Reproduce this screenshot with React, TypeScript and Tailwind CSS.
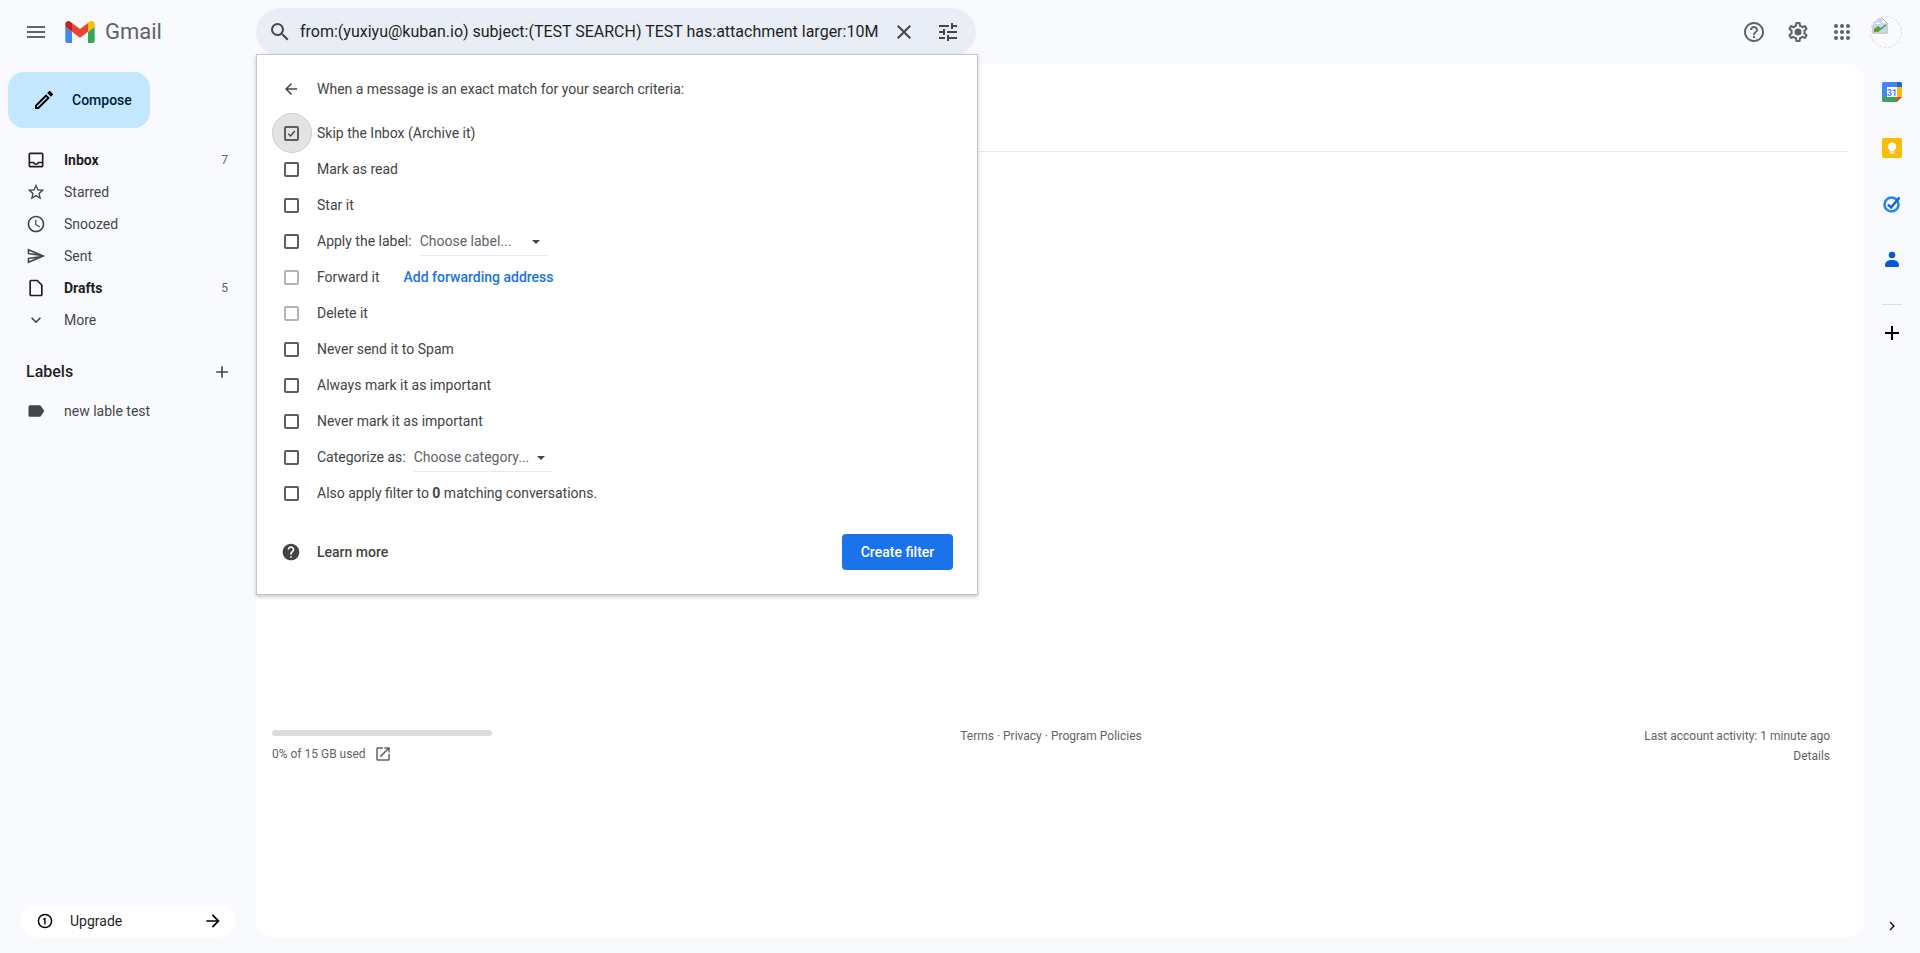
import React from "react";

const P = {
  menu: "M3 18h18v-2H3v2zm0-5h18v-2H3v2zm0-7v2h18V6H3z",
  search: "M15.5 14h-.79l-.28-.27A6.471 6.471 0 0 0 16 9.5 6.5 6.5 0 1 0 9.5 16c1.61 0 3.09-.59 4.23-1.57l.27.28v.79l5 4.99L20.49 19l-4.99-5zm-6 0C7.01 14 5 11.99 5 9.5S7.01 5 9.5 5 14 7.01 14 9.5 11.99 14 9.5 14z",
  close: "M19 6.41L17.59 5 12 10.59 6.41 5 5 6.41 10.59 12 5 17.59 6.41 19 12 13.41 17.59 19 19 17.59 13.41 12z",
  tune: "M3 17v2h6v-2H3zM3 5v2h10V5H3zm10 16v-2h8v-2h-8v-2h-2v6h2zM7 9v2H3v2h4v2h2V9H7zm14 4v-2H11v2h10zm-6-4h2V7h4V5h-4V3h-2v6z",
  help: "M11 18h2v-2h-2v2zm1-16C6.48 2 2 6.48 2 12s4.48 10 10 10 10-4.48 10-10S17.52 2 12 2zm0 18c-4.41 0-8-3.59-8-8s3.59-8 8-8 8 3.59 8 8-3.59 8-8 8zm0-14c-2.21 0-4 1.79-4 4h2c0-1.1.9-2 2-2s2 .9 2 2c0 2-3 1.75-3 5h2c0-2.25 3-2.5 3-5 0-2.21-1.79-4-4-4z",
  settings: "M19.43 12.98c.04-.32.07-.64.07-.98 0-.34-.03-.66-.07-.98l2.11-1.65c.19-.15.24-.42.12-.64l-2-3.46c-.09-.16-.26-.25-.44-.25-.06 0-.12.01-.17.03l-2.49 1c-.52-.4-1.08-.73-1.69-.98l-.38-2.65C14.46 2.18 14.25 2 14 2h-4c-.25 0-.46.18-.49.42l-.38 2.65c-.61.25-1.17.59-1.69.98l-2.49-1c-.06-.02-.12-.03-.18-.03-.17 0-.34.09-.43.25l-2 3.46c-.13.22-.07.49.12.64l2.11 1.65c-.04.32-.07.65-.07.98 0 .33.03.66.07.98l-2.11 1.65c-.19.15-.24.42-.12.64l2 3.46c.09.16.26.25.44.25.06 0 .12-.01.17-.03l2.49-1c.52.4 1.08.73 1.69.98l.38 2.65c.03.24.24.42.49.42h4c.25 0 .46-.18.49-.42l.38-2.65c.61-.25 1.17-.59 1.69-.98l2.49 1c.06.02.12.03.18.03.17 0 .34-.09.43-.25l2-3.46c.12-.22.07-.49-.12-.64l-2.11-1.65zm-1.98-1.71c.04.31.05.52.05.73 0 .21-.02.43-.05.73l-.14 1.13.89.7 1.08.84-.7 1.21-1.27-.51-1.04-.42-.9.68c-.43.32-.84.56-1.25.73l-1.06.43-.16 1.13-.2 1.35h-1.4l-.19-1.35-.16-1.13-1.06-.43c-.43-.18-.83-.41-1.23-.71l-.91-.7-1.06.43-1.27.51-.7-1.21 1.08-.84.89-.7-.14-1.13c-.03-.31-.05-.54-.05-.74s.02-.43.05-.73l.14-1.13-.89-.7-1.08-.84.7-1.21 1.27.51 1.04.42.9-.68c.43-.32.84-.56 1.25-.73l1.06-.43.16-1.13.2-1.35h1.39l.19 1.35.16 1.13 1.06.43c.43.18.83.41 1.23.71l.91.7 1.06-.43 1.27-.51.7 1.21-1.07.85-.89.7.14 1.13zM12 8.5a3.5 3.5 0 1 0 0 7 3.5 3.5 0 0 0 0-7z",
  pencil: "M3 17.25V21h3.75L17.81 9.94l-3.75-3.75L3 17.25zM5.92 19H5v-.92l9.06-9.06.92.92L5.92 19zM20.71 5.63l-2.34-2.34c-.2-.2-.45-.29-.71-.29s-.51.1-.7.29l-1.83 1.83 3.75 3.75 1.83-1.83c.39-.39.39-1.02 0-1.41z",
  inbox: "M19 3H5c-1.1 0-2 .9-2 2v14c0 1.1.9 2 2 2h14c1.1 0 2-.9 2-2V5c0-1.1-.9-2-2-2zm0 16H5v-3h3.56c.69 1.19 1.97 2 3.45 2s2.75-.81 3.45-2H19v3zm0-5h-4.99c0 1.1-.9 2-2 2s-2-.9-2-2H5V5h14v9z",
  star: "M22 9.24l-7.19-.62L12 2 9.19 8.63 2 9.24l5.46 4.73L5.82 21 12 17.27 18.18 21l-1.63-7.03L22 9.24zM12 15.4l-3.76 2.27 1-4.28-3.32-2.88 4.38-.38L12 6.1l1.71 4.04 4.38.38-3.32 2.88 1 4.28L12 15.4z",
  clock: "M11.99 2C6.47 2 2 6.48 2 12s4.47 10 9.99 10C17.52 22 22 17.52 22 12S17.52 2 11.99 2zM12 20c-4.42 0-8-3.58-8-8s3.58-8 8-8 8 3.58 8 8-3.58 8-8 8zm.5-13H11v6l5.25 3.15.75-1.23-4.5-2.67z",
  send: "M4.01 6.03l7.51 3.22-7.52-1 .01-2.22m7.5 8.72L4 17.97v-2.22l7.51-1M2.01 3L2 10l15 2-15 2 .01 7L23 12 2.01 3z",
  draft: "M14 2H6c-1.1 0-2 .9-2 2v16c0 1.1.9 2 2 2h12c1.1 0 2-.9 2-2V8l-6-6zm4 18H6V4h7.17L18 8.83V20z",
  chevDown: "M16.59 8.59L12 13.17 7.41 8.59 6 10l6 6 6-6z",
  label: "M17.63 5.84C17.27 5.33 16.67 5 16 5L5 5.01C3.9 5.01 3 5.9 3 7v10c0 1.1.9 1.99 2 1.99L16 19c.67 0 1.27-.33 1.63-.84L22 12l-4.37-6.16z",
  plus: "M19 13h-6v6h-2v-6H5v-2h6V5h2v6h6v2z",
  back: "M20 11H7.83l5.59-5.59L12 4l-8 8 8 8 1.41-1.41L7.83 13H20v-2z",
  forward: "M12 4l-1.41 1.41L16.17 11H4v2h12.17l-5.58 5.59L12 20l8-8z",
  helpFill: "M12 2C6.48 2 2 6.48 2 12s4.48 10 10 10 10-4.48 10-10S17.52 2 12 2zm1 17h-2v-2h2v2zm2.07-7.75l-.9.92C13.45 12.9 13 13.5 13 15h-2v-.5c0-1.1.45-2.1 1.17-2.83l1.24-1.26c.37-.36.59-.86.59-1.41 0-1.1-.9-2-2-2s-2 .9-2 2H8c0-2.21 1.79-4 4-4s4 1.79 4 4c0 .88-.36 1.68-.93 2.25z",
  open: "M19 19H5V5h7V3H5c-1.11 0-2 .9-2 2v14c0 1.1.89 2 2 2h14c1.1 0 2-.9 2-2v-7h-2v7zM14 3v2h3.59l-9.83 9.83 1.41 1.41L19 6.41V10h2V3h-7z",
  chevRight: "M10 6L8.59 7.41 13.17 12l-4.58 4.59L10 18l6-6z",
};

function Icon({ d, size = 24, color = "#444746" }: { d: string; size?: number; color?: string }) {
  return (
    <svg width={size} height={size} viewBox="0 0 24 24" fill={color} className="shrink-0">
      <path d={d} />
    </svg>
  );
}

function IconBox({ children }: { children: React.ReactNode }) {
  return <div className="w-[24px] h-[24px] flex items-center justify-center shrink-0">{children}</div>;
}

function GmailLogo() {
  return (
    <svg width="30" height="22" viewBox="52 42 88 66" className="shrink-0">
      <path fill="#4285f4" d="M58 108h14V74L52 59v43c0 3.32 2.69 6 6 6" />
      <path fill="#34a853" d="M120 108h14c3.32 0 6-2.69 6-6V59l-20 15" />
      <path fill="#fbbc04" d="M120 48v26l20-15v-8c0-7.42-8.47-11.65-14.4-7.2" />
      <path fill="#ea4335" d="M72 74V48l24 18 24-18v26L96 92" />
      <path fill="#c5221f" d="M52 51v8l20 15V48l-5.6-4.2c-5.94-4.45-14.4-.22-14.4 7.2" />
    </svg>
  );
}

function AppsIcon() {
  const c = [6, 12, 18];
  return (
    <svg width="24" height="24" viewBox="0 0 24 24" fill="#5f6368">
      {c.map((y) => c.map((x) => <circle key={`${x}-${y}`} cx={x} cy={y} r="2" />))}
    </svg>
  );
}

function NavItem({ d, label, bold, count }: { d: string; label: string; bold?: boolean; count?: string }) {
  return (
    <div className="h-[32px] flex items-center pl-[26px] pr-[28px]">
      <Icon d={d} size={20} color={bold ? "#1f1f1f" : "#444746"} />
      <span className={`ml-[18px] text-[14px] ${bold ? "font-bold text-[#1f1f1f]" : "text-[#444746]"}`}>{label}</span>
      {count && <span className="ml-auto text-[12px] text-[#5f6368]">{count}</span>}
    </div>
  );
}

function Check({ on, off }: { on?: boolean; off?: boolean }) {
  return (
    <div className={`relative ml-[27px] w-[15px] h-[15px] shrink-0 rounded-[2px] border-2 ${off ? "border-[#b4b4b4]" : "border-[#5e5e5e]"}`}>
      {on && (
        <>
          <div className="absolute -left-[14.5px] -top-[14.5px] w-[40px] h-[40px] rounded-full bg-[#e3e3e3] border border-[#cfcfcf] -z-10" />
          <svg width="11" height="11" viewBox="0 0 11 11" className="absolute left-0 top-0">
            <path d="M2.2 5.6 4.5 8l4.3-5" fill="none" stroke="#444" strokeWidth="1.3" />
          </svg>
        </>
      )}
    </div>
  );
}

function Row({ children, on, off }: { children: React.ReactNode; on?: boolean; off?: boolean }) {
  return (
    <div className="h-[36px] flex items-center">
      <Check on={on} off={off} />
      <div className="ml-[18px] flex items-center text-[14px] text-[#444]">{children}</div>
    </div>
  );
}

function FakeSelect({ text, w, ml }: { text: string; w: string; ml: string }) {
  return (
    <div className={`${w} ${ml} h-[28px] flex items-center justify-between relative border-b border-[#e8e8ee] pr-[8px] text-[#5f6368] mt-[2px]`}>
      <span>{text}</span>
      <div className="w-0 h-0 border-x-[4px] border-x-transparent border-t-[4px] border-t-[#444]" />
    </div>
  );
}

function PopupFilter() {
  return (
    <div className="absolute left-[256px] top-[54px] w-[722px] h-[541px] bg-white border border-[#c6c6c6] shadow-[0_2px_4px_rgba(0,0,0,0.22)] isolate pt-[16px]">
      <div className="h-[36px] flex items-center text-[14px] text-[#444]">
        <div className="ml-[25px] w-[18px] flex justify-center">
          <Icon d={P.back} size={18} color="#444" />
        </div>
        <span className="ml-[17px]">When a message is an exact match for your search criteria:</span>
      </div>
      <div className="mt-[8px]">
        <Row on>Skip the Inbox (Archive it)</Row>
        <Row>Mark as read</Row>
        <Row>Star it</Row>
        <Row>
          <span>Apply the label:</span>
          <FakeSelect text="Choose label..." w="w-[128px]" ml="ml-[8px]" />
        </Row>
        <Row off>
          <span>Forward it</span>
          <span className="ml-[24px] text-[#1a73e8] font-medium">Add forwarding address</span>
        </Row>
        <Row off>Delete it</Row>
        <Row>Never send it to Spam</Row>
        <Row>Always mark it as important</Row>
        <Row>Never mark it as important</Row>
        <Row>
          <span>Categorize as:</span>
          <FakeSelect text="Choose category..." w="w-[139px]" ml="ml-[8px]" />
        </Row>
        <Row>
          <span>
            Also apply filter to <b className="font-bold">0</b> matching conversations.
          </span>
        </Row>
      </div>
      <div className="mt-[23px] h-[36px] flex items-center pr-[24px]">
        <div className="ml-[24px]">
          <Icon d={P.helpFill} size={20} color="#444" />
        </div>
        <span className="ml-[16px] text-[14px] text-[#444] font-medium">Learn more</span>
        <div className="ml-auto h-[36px] w-[111px] rounded-[4px] bg-[#1a73e8] text-white text-[14px] font-medium flex items-center justify-center">
          Create filter
        </div>
      </div>
    </div>
  );
}

function BrokenAvatar() {
  return (
    <div className="relative w-[32px] h-[32px] rounded-full border border-dashed border-[#dcdcdc] overflow-hidden bg-[#f8fafd]">
      <svg width="16" height="16" viewBox="0 0 16 16" className="absolute left-[1px] top-[1px]">
        <path d="M1 1h10l4 4v10H1z" fill="#fff" stroke="#a0a0a0" />
        <path d="M2 2h8v3h4v9H2z" fill="#c3d7f5" />
        <path d="M2 14v-3l4-3 3 2 5-4v2l-8 6z" fill="#5aa02c" />
        <path d="M3 6l3-2 3 2z" fill="#fff" />
      </svg>
    </div>
  );
}

function RailIcon({ children }: { children: React.ReactNode }) {
  return <div className="h-[56px] flex items-center justify-center">{children}</div>;
}

export default function App() {
  return (
    <div className="relative w-[1920px] h-[953px] overflow-hidden bg-[#f8fafd] font-['Roboto',sans-serif] flex flex-col">
      {/* Header */}
      <header className="h-[64px] flex items-center shrink-0">
        <div className="w-[256px] flex items-center shrink-0">
          <div className="ml-[24px]">
            <Icon d={P.menu} color="#5f6368" />
          </div>
          <div className="ml-[17px]">
            <GmailLogo />
          </div>
          <span className="ml-[10px] text-[22px] text-[#5f6368] leading-none">Gmail</span>
        </div>
        <div className="w-[720px] h-[48px] rounded-[24px] bg-[#e9eef6] flex items-center pl-[12px] pr-[14px]">
          <Icon d={P.search} color="#444746" />
          <div className="ml-[8px] w-[580px] overflow-hidden whitespace-nowrap text-[16px] text-[#1f1f1f]">
            from:(yuxiyu@kuban.io) subject:(TEST SEARCH) TEST has:attachment larger:10M
          </div>
          <div className="ml-[12px]">
            <Icon d={P.close} color="#444746" />
          </div>
          <div className="ml-[20px]">
            <Icon d={P.tune} color="#444746" />
          </div>
        </div>
        <div className="ml-auto flex items-center pr-[18px]">
          <div className="flex items-center gap-[20px]">
            <IconBox><Icon d={P.help} color="#5f6368" /></IconBox>
            <IconBox><Icon d={P.settings} color="#5f6368" /></IconBox>
            <IconBox><AppsIcon /></IconBox>
          </div>
          <div className="ml-[16px]">
            <BrokenAvatar />
          </div>
        </div>
      </header>

      {/* Body */}
      <div className="flex-1 flex min-h-0 pb-[16px]">
        <aside className="w-[256px] shrink-0 flex flex-col">
          <div className="ml-[8px] mt-[8px] w-[142px] h-[56px] rounded-[16px] bg-[#c2e7ff] flex items-center pl-[24px]">
            <Icon d={P.pencil} color="#000" />
            <span className="ml-[16px] text-[14px] font-medium text-[#001d35]">Compose</span>
          </div>
          <nav className="mt-[16px]">
            <NavItem d={P.inbox} label="Inbox" bold count="7" />
            <NavItem d={P.star} label="Starred" />
            <NavItem d={P.clock} label="Snoozed" />
            <NavItem d={P.send} label="Sent" />
            <NavItem d={P.draft} label="Drafts" bold count="5" />
            <NavItem d={P.chevDown} label="More" />
          </nav>
          <div className="mt-[16px] h-[40px] flex items-center pl-[26px] pr-[24px] justify-between">
            <span className="text-[16px] font-medium text-[#1f1f1f]">Labels</span>
            <Icon d={P.plus} size={20} color="#444746" />
          </div>
          <div className="mt-[3px]">
            <NavItem d={P.label} label="new lable test" />
          </div>
          <div className="mt-auto mx-[20px] h-[32px] rounded-full bg-white flex items-center pl-[16px] pr-[13px]">
            <svg width="18" height="18" viewBox="0 0 18 18" className="shrink-0">
              <circle cx="9" cy="9" r="6.6" fill="none" stroke="#000" strokeWidth="1.5" />
              <path d="M7.2 6.8 9.6 5.6V12.4H8.2V7.6L7.2 8.1z" fill="#000" />
            </svg>
            <span className="ml-[16px] text-[14px] text-[#1f1f1f]">Upgrade</span>
            <div className="ml-auto">
              <Icon d={P.forward} size={20} color="#000" />
            </div>
          </div>
        </aside>

        <main className="flex-1 min-w-0 bg-white rounded-[16px] flex flex-col">
          <div className="ml-[16px] mr-[16px] pt-[56px] pb-[7px] border-b border-[#e8eaed] h-[88px] text-[14px] text-[#444] leading-[24px]">
            <div className="pl-[400px] whitespace-nowrap">No existing messages match your criteria.</div>
          </div>
          <div className="mt-[578px] flex pl-[16px] pr-[34px] text-[12px] text-[#5f6368]">
            <div className="w-[220px] shrink-0">
              <div className="h-[6px] rounded-full bg-[#dadce0]" />
              <div className="mt-[9px] flex items-center">
                <span>0% of 15 GB used</span>
                <div className="ml-[8px]">
                  <Icon d={P.open} size={18} color="#5f6368" />
                </div>
              </div>
            </div>
            <div className="flex-1 text-center leading-[16px] -mt-[2px]">Terms · Privacy · Program Policies</div>
            <div className="w-[220px] shrink-0 text-right -mt-[2px]">
              <div className="leading-[16px]">Last account activity: 1 minute ago</div>
              <div className="mt-[4px] leading-[16px]">Details</div>
            </div>
          </div>
        </main>

        <aside className="w-[56px] shrink-0 flex flex-col items-stretch pt-0">
          <div className="mt-0">
            <RailIcon>
              <svg width="20" height="20" viewBox="0 0 20 20">
                <path d="M1.5 0H15v5H5v10H0V1.5A1.5 1.5 0 0 1 1.5 0z" fill="#4285f4" />
                <path d="M15 0h3.5A1.5 1.5 0 0 1 20 1.5V5h-5z" fill="#1967d2" />
                <path d="M15 5h5v10h-5z" fill="#fbbc04" />
                <path d="M0 15h15v5H1.5A1.5 1.5 0 0 1 0 18.500z" fill="#34a853" />
                <path d="M15 15h5l-5 5z" fill="#ea4335" />
                <rect x="5" y="5" width="10" height="10" fill="#fff" />
                <text x="10" y="13.6" textAnchor="middle" fontSize="8.5" fontWeight="700" fill="#4285f4" fontFamily="Roboto, sans-serif">31</text>
              </svg>
            </RailIcon>
            <RailIcon>
              <svg width="20" height="20" viewBox="0 0 20 20">
                <rect width="20" height="20" rx="2" fill="#fbbc04" />
                <path d="M10 4.500a4.200 4.200 0 0 0-2.300 7.700V13.500h4.600V12.200A4.200 4.200 0 0 0 10 4.500z" fill="#fff" />
                <rect x="7.700" y="14.400" width="4.600" height="1.300" fill="#fff" />
              </svg>
            </RailIcon>
            <RailIcon>
              <svg width="20" height="20" viewBox="0 0 20 20" fill="none">
                <circle cx="9.500" cy="10.500" r="7" stroke="#2684fc" strokeWidth="2.600" />
                <path d="M6 10.500l3 3 8.500-10" stroke="#0f5fd6" strokeWidth="2.400" />
              </svg>
            </RailIcon>
            <RailIcon>
              <svg width="20" height="20" viewBox="0 0 20 20">
                <circle cx="10" cy="5" r="3.300" fill="#0b57d0" />
                <path d="M3 15.500C3 11.500 6 10 10 10s7 1.500 7 5.500a1.500 1.500 0 0 1-1.500 1.500h-11A1.500 1.500 0 0 1 3 15.500z" fill="#0b57d0" />
              </svg>
            </RailIcon>
          </div>
          <div className="mx-[18px] mt-[16px] h-px bg-[#dadce0]" />
          <div className="mt-[16px] flex justify-center">
            <Icon d={P.plus} color="#000" />
          </div>
          <div className="mt-auto flex justify-center -translate-y-[2px]">
            <Icon d={P.chevRight} size={18} color="#1f1f1f" />
          </div>
        </aside>
      </div>

      <PopupFilter />
    </div>
  );
}
